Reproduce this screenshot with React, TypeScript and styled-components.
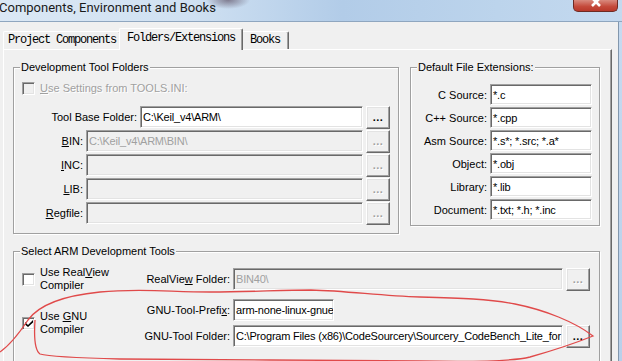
import * as React from 'react'
import styled, { createGlobalStyle } from 'styled-components'

const GlobalStyle = createGlobalStyle`
  html, body {
    margin: 0;
    padding: 0;
    overflow: hidden;
    background: #f0f0f0;
  }
  body {
    font-family: 'Liberation Sans', Arial, sans-serif;
    font-size: 11px;
    color: #000;
  }
`

const Window = styled.div`
  position: relative;
  width: 622px;
  height: 361px;
  overflow: hidden;
  display: flex;
  flex-direction: column;
  background: #c4d8ee;
`

const TitleBar = styled.div`
  height: 21px;
  flex-shrink: 0;
  display: flex;
  align-items: flex-start;
  background:
    radial-gradient(ellipse 22px 9px at 228px 0px, rgba(96, 84, 104, 0.7), rgba(96, 84, 104, 0)),
    linear-gradient(to right, #dbe8f5 0%, #d0e1f2 30%, #b2cce8 55%, #bcd4ec 80%, #c4d9ef 100%);
`

const TitleText = styled.span`
  margin-left: -1px;
  font-family: Roboto, 'Noto Sans', sans-serif;
  font-size: 13px;
  line-height: 15px;
  color: #1a1a1a;
  white-space: nowrap;
`

const CloseButton = styled.div`
  margin-left: auto;
  margin-right: 4px;
  width: 45px;
  height: 12px;
  box-sizing: border-box;
  border: 1px solid #6e2a23;
  border-top: none;
  border-radius: 0 0 5px 5px;
  background: linear-gradient(to bottom, #d98a7e, #c4493a 60%, #b8392b);
  display: flex;
  justify-content: center;
  align-items: flex-start;
  overflow: hidden;

  svg {
    margin-top: -4px;
  }
`

const Body = styled.div`
  flex: 1;
  min-height: 0;
  display: flex;
  border-top: 1px solid #8fa6bf;
`

const Client = styled.div`
  flex: 1;
  min-width: 0;
  overflow: hidden;
  background: #f0f0f0;
  padding: 6px 6px 0 3px;
  display: flex;
  flex-direction: column;
`

const FrameEdge = styled.div`
  width: 3px;
  flex: none;
  border-left: 1px solid #8297ad;
  background: linear-gradient(to bottom, #c6daf0, #b9d0ea);
`

const TabStrip = styled.div`
  position: relative;
  z-index: 1;
  height: 21px;
  flex: none;
  display: flex;
  align-items: flex-end;
`

const Tab = styled.div<{ $active?: boolean; $width: number }>`
  position: relative;
  z-index: ${({ $active }) => ($active ? 2 : 1)};
  box-sizing: border-box;
  width: ${({ $width, $active }) => ($active ? $width + 4 : $width)}px;
  height: ${({ $active }) => ($active ? 22 : 18)}px;
  margin: 0 ${({ $active }) => ($active ? '-2px -1px' : '0 0')};
  padding-top: ${({ $active }) => ($active ? 1 : 0)}px;
  border-top: 1px solid #fff;
  border-left: 1px solid #fff;
  border-right: 1px solid #696969;
  box-shadow: inset -1px 0 #a0a0a0;
  border-radius: 2px 2px 0 0;
  background: #f0f0f0;
  text-align: center;
  font-family: 'Liberation Mono', 'DejaVu Sans Mono', monospace;
  font-size: 12px;
  letter-spacing: -1.2px;
  line-height: 16px;
  white-space: nowrap;
`

const TabPanel = styled.div`
  flex: 1;
  min-width: 0;
  border-top: 1px solid #fff;
  border-left: 1px solid #fff;
  border-right: 1px solid #696969;
  box-shadow: inset -1px 0 #a0a0a0;
  padding: 10px 10px 0 9px;
  display: flex;
  flex-direction: column;
`

const TopRow = styled.div`
  display: flex;
  align-items: flex-start;
  gap: 11px;
`

const Group = styled.fieldset<{ $width?: number }>`
  margin: 0;
  padding: 0;
  min-width: 0;
  box-sizing: border-box;
  width: ${({ $width }) => ($width ? `${$width}px` : 'auto')};
  border: 1px solid #a0a0a0;
  box-shadow: inset 1px 1px #fff, 1px 1px #fff;
`

const ArmGroup = styled(Group)`
  margin-top: 10px;
  margin-right: 1px;
`

const Legend = styled.legend`
  position: relative;
  margin-left: 6px;
  padding: 0 1px;
  line-height: 14px;
  background: #f0f0f0;
`

const DevBody = styled.div`
  padding: 7px 8px 9px 0;
  display: flex;
  flex-direction: column;
  gap: 2px;
`

const ExtBody = styled.div`
  padding: 10px 7px 5px 0;
  display: flex;
  flex-direction: column;
  gap: 2px;
`

const ArmBody = styled.div`
  padding: 8px 9px 30px 0;
  display: flex;
  flex-direction: column;
  gap: 7px;
`

const CheckRow = styled.div`
  height: 14px;
  margin-bottom: 9px;
  padding-left: 8px;
  display: flex;
  align-items: center;
  gap: 5px;
`

const CheckOption = styled.div`
  width: 126px;
  flex: none;
  box-sizing: border-box;
  padding-left: 8px;
  display: flex;
  align-items: center;
  gap: 5px;
`

const CheckBox = styled.span<{ $disabled?: boolean }>`
  box-sizing: border-box;
  width: 13px;
  height: 13px;
  flex: none;
  border: 1px solid;
  border-color: #a0a0a0 #fff #fff #a0a0a0;
  box-shadow: inset 1px 1px #696969, inset -1px -1px #e3e3e3;
  background: ${({ $disabled }) => ($disabled ? '#f0f0f0' : '#fff')};
  display: flex;
  align-items: center;
  justify-content: center;
`

const CheckText = styled.span<{ $disabled?: boolean }>`
  line-height: 13px;
  color: ${({ $disabled }) => ($disabled ? '#a0a0a0' : '#000')};
  text-shadow: ${({ $disabled }) => ($disabled ? '1px 1px #fff' : 'none')};
`

const ToolBlock = styled.div`
  display: flex;
  align-items: center;
`

const FieldColumn = styled.div`
  flex: 1;
  min-width: 0;
  display: flex;
  flex-direction: column;
  gap: 4px;
`

const FieldRow = styled.div<{ $height?: number }>`
  height: ${({ $height }) => $height ?? 22}px;
  min-width: 0;
  display: flex;
  align-items: center;
`

const FieldLabel = styled.label<{ $width: number }>`
  width: ${({ $width }) => $width}px;
  flex: none;
  margin-right: 3px;
  text-align: right;
  white-space: nowrap;
`

const TextBox = styled.div<{ $disabled?: boolean; $width?: number }>`
  box-sizing: border-box;
  align-self: stretch;
  flex: ${({ $width }) => ($width ? 'none' : '1')};
  width: ${({ $width }) => ($width ? `${$width}px` : 'auto')};
  min-width: 0;
  padding: 0 1px 0 2px;
  display: flex;
  align-items: center;
  white-space: nowrap;
  overflow: hidden;
  letter-spacing: -0.2px;
  background: ${({ $disabled }) => ($disabled ? '#f0f0f0' : '#fff')};
  color: ${({ $disabled }) => ($disabled ? '#a0a0a0' : '#000')};
  border: 1px solid;
  border-color: #a0a0a0 #fff #fff #a0a0a0;
  box-shadow: inset 1px 1px #696969, inset -1px -1px #e3e3e3;
`

const BrowseButton = styled.div<{ $disabled?: boolean }>`
  box-sizing: border-box;
  width: 24px;
  height: 23px;
  flex: none;
  margin-left: 3px;
  border: 1px solid;
  border-color: #fff #696969 #696969 #fff;
  box-shadow: inset -1px -1px #a0a0a0, inset 1px 1px #e3e3e3;
  background: #f0f0f0;
  display: flex;
  align-items: center;
  justify-content: center;
  font-weight: bold;
  letter-spacing: 0.5px;
  color: ${({ $disabled }) => ($disabled ? '#a0a0a0' : '#000')};
  text-shadow: ${({ $disabled }) => ($disabled ? '1px 1px #fff' : 'none')};
`

const Annotation = styled.svg`
  position: absolute;
  top: 0;
  left: 0;
  pointer-events: none;
`

const Checkmark = () => (
  <svg width="8" height="8" viewBox="0 0 8 8">
    <path d="M0 3 L3 6 L8 1 L8 3.5 L3 8 L0 5.5 Z" fill="#000" />
  </svg>
)

const folders = [
  { label: <><u>B</u>IN:</>, value: 'C:\\Keil_v4\\ARM\\BIN\\' },
  { label: <><u>I</u>NC:</>, value: '' },
  { label: <><u>L</u>IB:</>, value: '' },
  { label: <><u>R</u>egfile:</>, value: '' },
]

const extensions = [
  { label: 'C Source:', value: '*.c' },
  { label: 'C++ Source:', value: '*.cpp' },
  { label: 'Asm Source:', value: '*.s*; *.src; *.a*' },
  { label: 'Object:', value: '*.obj' },
  { label: 'Library:', value: '*.lib' },
  { label: 'Document:', value: '*.txt; *.h; *.inc' },
]

// hand drawn red loop round the GNU settings
const loopPath =
  'M0 352 C10 345, 20 332, 28 320 C38 306, 60 296, 100 292 C140 288, 170 292, 210 292 ' +
  'C250 292, 280 290, 311 290 C350 291, 380 296, 420 297 C460 298, 490 299, 515 304 ' +
  'C545 310, 575 322, 593 336 C578 342, 555 350, 530 357 C510 362, 470 362, 420 361 ' +
  'C340 360, 200 360, 120 359 C80 358, 50 357, 40 354 C34 350, 34 335, 35 320'

const App: React.FC = () => {
  return (
    <>
      <GlobalStyle />
      <Window>
        <TitleBar>
          <TitleText>Components, Environment and Books</TitleText>
          <CloseButton>
            <svg width="12" height="12" viewBox="0 0 12 12">
              <path d="M2 2 L10 10 M10 2 L2 10" stroke="#fff" strokeWidth="2.6" />
            </svg>
          </CloseButton>
        </TitleBar>
        <Body>
          <Client>
            <TabStrip>
              <Tab $width={118}>Project Components</Tab>
              <Tab $width={120} $active>
                Folders/Extensions
              </Tab>
              <Tab $width={48}>Books</Tab>
            </TabStrip>
            <TabPanel>
              <TopRow>
                <Group $width={386}>
                  <Legend>Development Tool Folders</Legend>
                  <DevBody>
                    <CheckRow>
                      <CheckBox $disabled />
                      <CheckText $disabled>
                        <u>U</u>se Settings from TOOLS.INI:
                      </CheckText>
                    </CheckRow>
                    <FieldRow>
                      <FieldLabel $width={123}>Tool Base Folder:</FieldLabel>
                      <TextBox>C:\Keil_v4\ARM\</TextBox>
                      <BrowseButton>...</BrowseButton>
                    </FieldRow>
                    {folders.map((f, i) => (
                      <FieldRow key={i}>
                        <FieldLabel $width={69}>{f.label}</FieldLabel>
                        <TextBox $disabled>{f.value}</TextBox>
                        <BrowseButton $disabled>...</BrowseButton>
                      </FieldRow>
                    ))}
                  </DevBody>
                </Group>
                <Group $width={190}>
                  <Legend>Default File Extensions:</Legend>
                  <ExtBody>
                    {extensions.map((e) => (
                      <FieldRow key={e.label} $height={21}>
                        <FieldLabel $width={76}>{e.label}</FieldLabel>
                        <TextBox>{e.value}</TextBox>
                      </FieldRow>
                    ))}
                  </ExtBody>
                </Group>
              </TopRow>
              <ArmGroup>
                <Legend>Select ARM Development Tools</Legend>
                <ArmBody>
                  <ToolBlock>
                    <CheckOption>
                      <CheckBox />
                      <CheckText>
                        Use Real<u>V</u>iew
                        <br />
                        Compiler
                      </CheckText>
                    </CheckOption>
                    <FieldColumn>
                      <FieldRow>
                        <FieldLabel $width={90}>
                          RealVie<u>w</u> Folder:
                        </FieldLabel>
                        <TextBox $disabled>BIN40\</TextBox>
                        <BrowseButton $disabled>...</BrowseButton>
                      </FieldRow>
                    </FieldColumn>
                  </ToolBlock>
                  <ToolBlock>
                    <CheckOption>
                      <CheckBox>
                        <Checkmark />
                      </CheckBox>
                      <CheckText>
                        Use <u>G</u>NU
                        <br />
                        Compiler
                      </CheckText>
                    </CheckOption>
                    <FieldColumn>
                      <FieldRow>
                        <FieldLabel $width={90}>
                          GNU-Tool-Prefi<u>x</u>:
                        </FieldLabel>
                        <TextBox $width={101}>arm-none-linux-gnue</TextBox>
                      </FieldRow>
                      <FieldRow>
                        <FieldLabel $width={90}>GNU-Tool Folder:</FieldLabel>
                        <TextBox>C:\Program Files (x86)\CodeSourcery\Sourcery_CodeBench_Lite_for</TextBox>
                        <BrowseButton>...</BrowseButton>
                      </FieldRow>
                    </FieldColumn>
                  </ToolBlock>
                </ArmBody>
              </ArmGroup>
            </TabPanel>
          </Client>
          <FrameEdge />
        </Body>
        <Annotation width="622" height="361" viewBox="0 0 622 361">
          <path d={loopPath} fill="none" stroke="#e04a4a" strokeWidth="1.3" />
        </Annotation>
      </Window>
    </>
  )
}

export default App
